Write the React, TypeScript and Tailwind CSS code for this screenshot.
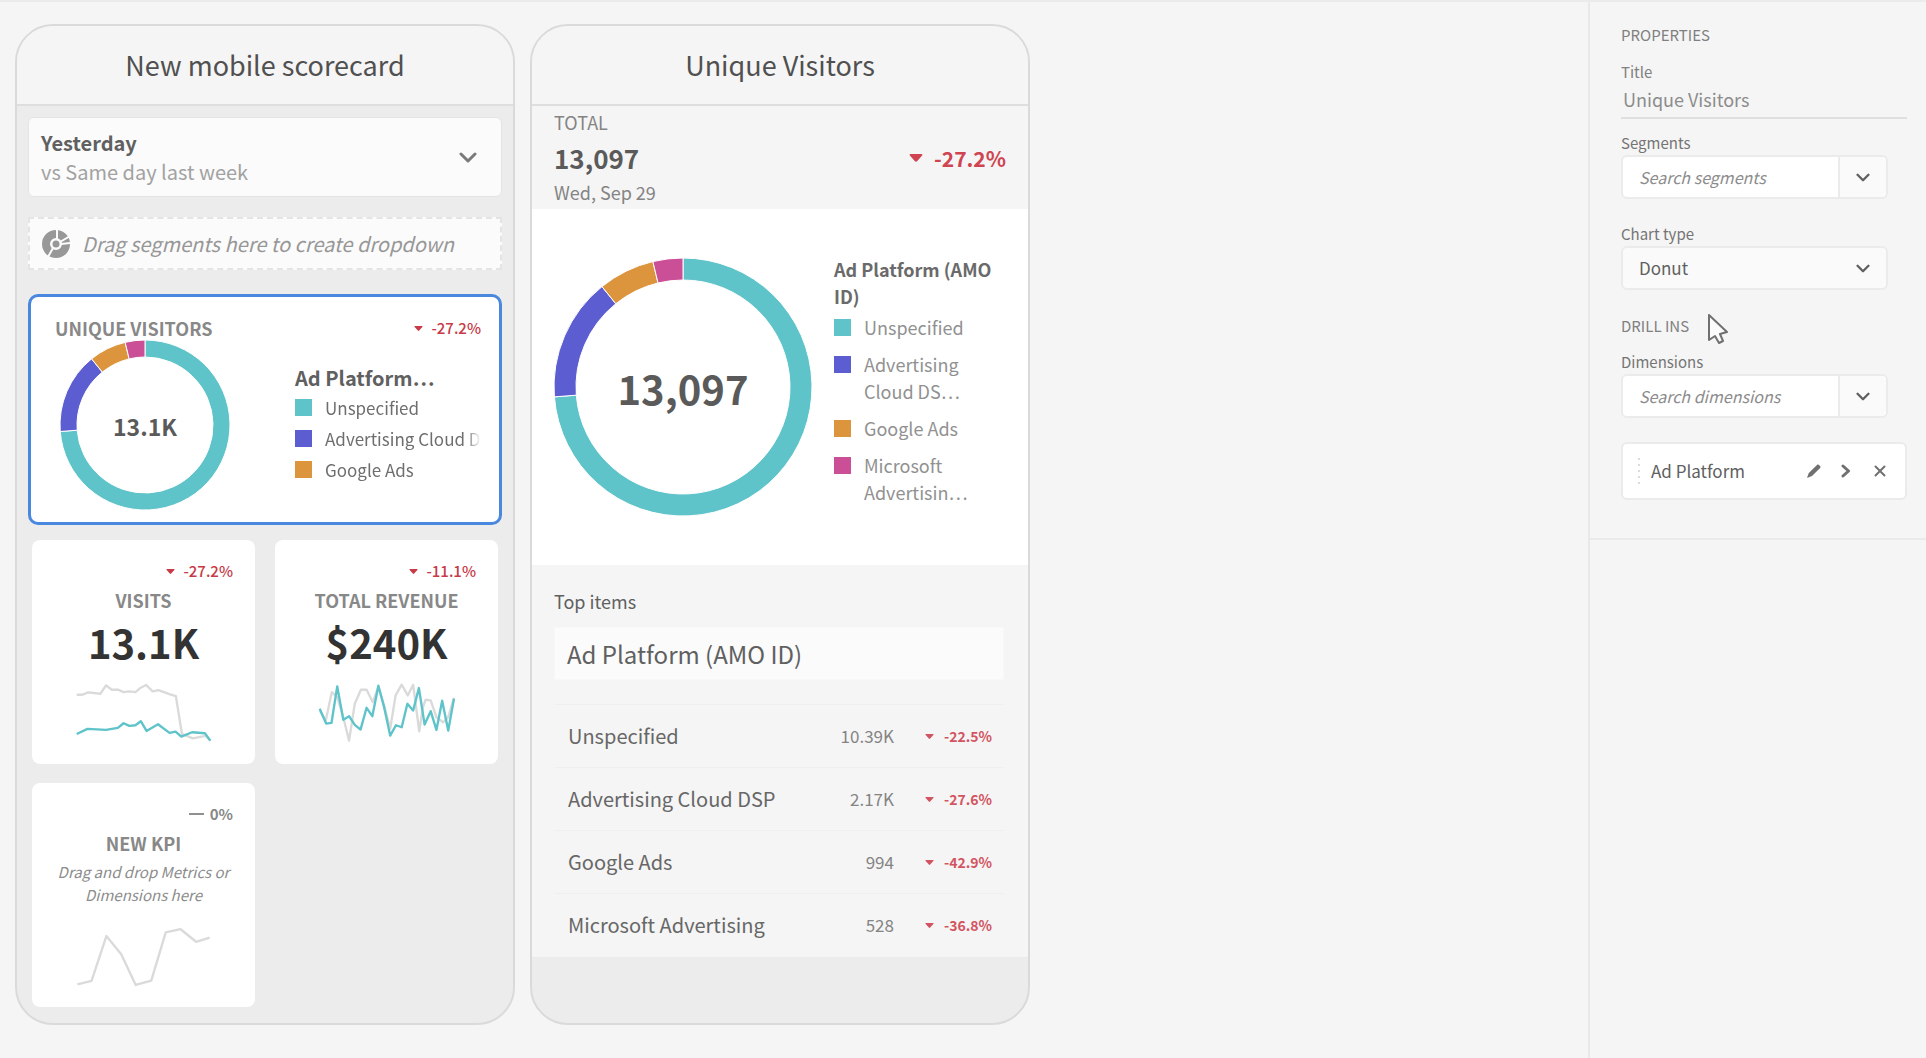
import type { ReactNode } from 'react'

type Slice = { name: string; value: number; color: string; swatch: string }

const slices: Slice[] = [
  { name: 'Unspecified', value: 10390, color: '#5fc3ca', swatch: 'bg-[#5fc3ca]' },
  { name: 'Advertising Cloud DSP', value: 2170, color: '#5c5dd0', swatch: 'bg-[#5c5dd0]' },
  { name: 'Google Ads', value: 994, color: '#dc953c', swatch: 'bg-[#dc953c]' },
  { name: 'Microsoft Advertising', value: 528, color: '#cb4f96', swatch: 'bg-[#cb4f96]' },
]

const topItems = [
  { name: 'Unspecified', value: '10.39K', change: '-22.5%' },
  { name: 'Advertising Cloud DSP', value: '2.17K', change: '-27.6%' },
  { name: 'Google Ads', value: '994', change: '-42.9%' },
  { name: 'Microsoft Advertising', value: '528', change: '-36.8%' },
]

function Donut({ outer, inner, className, label }: { outer: number; inner: number; className: string; label: string }) {
  const total = slices.reduce((sum, s) => sum + s.value, 0)
  const point = (r: number, t: number) =>
    `${(outer + r * Math.sin(t * 2 * Math.PI)).toFixed(2)} ${(outer - r * Math.cos(t * 2 * Math.PI)).toFixed(2)}`
  let start = 0
  return (
    <svg viewBox={`0 0 ${outer * 2} ${outer * 2}`} className={className} role="img" aria-label={label}>
      {slices.map((s) => {
        const from = start
        const to = start + s.value / total
        start = to
        const large = to - from > 0.5 ? 1 : 0
        return (
          <path
            key={s.name}
            fill={s.color}
            stroke="#fff"
            strokeWidth="1"
            d={`M${point(outer, from)} A${outer} ${outer} 0 ${large} 1 ${point(outer, to)} L${point(inner, to)} A${inner} ${inner} 0 ${large} 0 ${point(inner, from)} Z`}
          />
        )
      })}
    </svg>
  )
}

function Chevron({ className }: { className: string }) {
  return (
    <svg viewBox="0 0 18 11" className={className} fill="none" stroke="currentColor" strokeWidth="3" strokeLinecap="round" strokeLinejoin="round" aria-hidden="true">
      <path d="M2 2l7 7 7-7" />
    </svg>
  )
}

function Down({ className }: { className: string }) {
  return (
    <svg viewBox="0 0 10 6" className={className} fill="currentColor" aria-hidden="true">
      <path d="M1 0h8c.8 0 1.100.7.6 1.200L5.800 5.500c-.4.5-1.200.5-1.600 0L.4 1.200C-.1.700.2 0 1 0z" />
    </svg>
  )
}

function Change({ value }: { value: string }) {
  return (
    <span className="flex items-center gap-2 text-[15px] leading-[22px] font-medium text-[#c73a48]">
      <Down className="h-[5px] w-[9px]" />
      {value}
    </span>
  )
}

function Phone({ title, children }: { title: string; children: ReactNode }) {
  return (
    <section className="flex w-[500px] shrink-0 flex-col overflow-hidden rounded-[38px] border-2 border-[#dadada] bg-[#ececec]">
      <h2 className="flex h-20 shrink-0 items-center justify-center border-b-2 border-[#dedede] bg-[#f5f5f5] text-[27px] leading-8 text-[#505050]">
        {title}
      </h2>
      {children}
    </section>
  )
}

function Sparkline({ series }: { series: { points: string; color: string }[] }) {
  return (
    <svg viewBox="0 0 415 185" preserveAspectRatio="none" className="absolute left-1/2 top-[142px] h-[62px] w-[140px] -translate-x-1/2" fill="none" strokeLinejoin="round" aria-hidden="true">
      {series.map((s) => (
        <polyline key={s.points} points={s.points} stroke={s.color} strokeWidth="7" />
      ))}
    </svg>
  )
}

function Tile({ change, title, children }: { change: ReactNode; title: string; children: ReactNode }) {
  return (
    <article className="relative flex h-56 flex-col items-center rounded-lg bg-white pt-5 text-center">
      <div className="self-end pr-[22px]">{change}</div>
      <h3 className="mt-[6px] text-[18px] leading-6 font-bold text-[#888888]">{title}</h3>
      {children}
    </article>
  )
}

function SearchBox({ id, label, placeholder }: { id: string; label: string; placeholder: string }) {
  return (
    <div>
      <label htmlFor={id} className="block text-[15px] leading-6 text-[#747474]">{label}</label>
      <div className="mr-[19px] flex h-11 rounded-md border-2 border-[#ebebeb] bg-white">
        <input id={id} type="text" placeholder={placeholder} className="w-full min-w-0 flex-1 bg-transparent pl-4 text-[16px] text-[#6e6e6e] outline-none placeholder:text-[#8c8c8c] placeholder:italic" />
        <button type="button" aria-label={`Show ${label.toLowerCase()}`} className="flex w-12 items-center justify-center rounded-r-md border-l-2 border-[#ebebeb] bg-[#fafafa] text-[#606060]">
          <Chevron className="h-[9px] w-[14px]" />
        </button>
      </div>
    </div>
  )
}

function SegmentIcon() {
  return (
    <svg viewBox="0 0 28 28" className="h-7 w-7 shrink-0" aria-hidden="true">
      <circle cx="14" cy="14" r="10" fill="none" stroke="#989898" strokeWidth="8" />
      <circle cx="14" cy="14" r="3.500" fill="#989898" />
      <g stroke="#fbfbfb" strokeWidth="2">
        <path d="M15 9V0M18 12l10-6M19 14l9-1M11 18l-5 9" />
      </g>
    </svg>
  )
}

export default function App() {
  return (
    <div className="flex min-h-screen border-t-2 border-[#ebebeb] bg-[#f5f5f5] font-['Noto_Sans_CJK_SC','Open_Sans',sans-serif] text-[#6e6e6e]">
      <main className="flex flex-1 items-start pt-[22px] pr-4 pb-8 pl-[15px]">
        <div className="flex items-stretch gap-[15px]">
          <Phone title="New mobile scorecard">
            <div className="flex flex-col px-[11px] pt-[11px] pb-4">
              <button type="button" className="flex h-20 items-center justify-between rounded-md border border-[#e4e4e4] bg-[#fbfbfb] pr-6 pl-3 text-left">
                <span className="flex flex-col text-[20px] leading-[29px]">
                  <span className="font-bold text-[#606060]">Yesterday</span>
                  <span className="text-[#a2a2a2]">vs Same day last week</span>
                </span>
                <Chevron className="h-[11px] w-[18px] text-[#7a7a7a]" />
              </button>

              <div className="mt-5 flex h-[53px] items-center gap-3 border-2 border-dashed border-[#e4e4e4] bg-[#fbfbfb] pl-3 text-[20px] leading-7 text-[#979797] italic">
                <SegmentIcon />
                Drag segments here to create dropdown
              </div>

              <article className="mt-6 flex h-[231px] flex-col rounded-[10px] border-[3px] border-[#4a88e0] bg-white pt-[19px] pr-[18px] pl-6">
                <div className="flex items-center justify-between">
                  <h3 className="text-[18px] leading-6 font-bold text-[#888888]">UNIQUE VISITORS</h3>
                  <Change value="-27.2%" />
                </div>
                <div className="flex pl-[5px]">
                  <div className="relative h-[170px] w-[170px] shrink-0">
                    <Donut outer={85} inner={68} className="h-full w-full" label="Unique visitors by ad platform" />
                    <span className="absolute inset-0 flex items-center justify-center pt-[2px] text-[23px] leading-8 font-bold text-[#5a5a5a]">13.1K</span>
                  </div>
                  <div className="ml-[65px] min-w-0 flex-1 pt-6">
                    <h4 className="text-[20px] leading-7 font-bold text-[#606060]">Ad Platform…</h4>
                    <ul>
                      {slices.slice(0, 3).map((s) => (
                        <li key={s.name} className="flex h-[31px] items-center gap-[13px]">
                          <span className={`h-[17px] w-[17px] shrink-0 ${s.swatch}`} />
                          <span className="min-w-0 flex-1 overflow-hidden mask-r-from-90% text-[17px] leading-6 whitespace-nowrap">{s.name}</span>
                        </li>
                      ))}
                    </ul>
                  </div>
                </div>
              </article>

              <div className="mt-[15px] grid grid-cols-2 gap-x-5 gap-y-[19px] px-1">
                <Tile title="VISITS" change={<Change value="-27.2%" />}>
                  <p className="text-[40px] leading-[60px] font-bold text-[#333333]">13.1K</p>
                  <Sparkline
                    series={[
                      { color: '#dadada', points: '8,38 25,38 42,31 78,35 95,10 112,23 130,23 147,30 164,28 182,30 198,17 214,9 233,28 250,24 285,37 302,42 320,155 352,168 390,161 405,175' },
                      { color: '#5fc3ca', points: '8,155 40,140 95,143 130,137 147,123 164,131 182,129 198,117 215,146 249,126 283,152 301,148 318,163 350,150 388,153 404,175' },
                    ]}
                  />
                </Tile>
                <Tile title="TOTAL REVENUE" change={<Change value="-11.1%" />}>
                  <p className="text-[40px] leading-[60px] font-bold text-[#333333]">$240K</p>
                  <Sparkline
                    series={[
                      { color: '#dadada', points: '8,85 26,115 44,30 60,45 78,105 95,175 112,65 130,23 147,23 165,60 182,15 200,75 217,140 233,40 251,8 269,40 285,8 303,147 314,75 322,53 337,55 354,105 374,120 389,105 406,47' },
                      { color: '#5fc3ca', points: '8,80 27,124 43,122 60,13 78,113 95,102 112,128 129,142 147,77 164,102 182,11 199,75 217,160 234,129 251,135 268,65 285,85 302,18 319,127 337,87 354,143 371,56 389,145 406,50' },
                    ]}
                  />
                </Tile>
                <Tile
                  title="NEW KPI"
                  change={
                    <span className="flex items-center gap-[6px] text-[15px] leading-[22px] font-bold text-[#888888]">
                      <span className="h-[2px] w-[15px] bg-[#909090]" />
                      0%
                    </span>
                  }
                >
                  <p className="mt-[5px] px-4 text-[15px] leading-[23px] text-[#8c8c8c] italic">Drag and drop Metrics or Dimensions here</p>
                  <Sparkline
                    series={[{ color: '#dadada', points: '10,177 52,167 96,33 140,87 183,179 229,166 272,22 315,12 362,50 402,38' }]}
                  />
                </Tile>
              </div>
            </div>
          </Phone>

          <Phone title="Unique Visitors">
            <div className="flex h-[103px] items-center justify-between bg-[#f5f5f5] px-[22px]">
              <div className="pb-[3px]">
                <p className="text-[18px] leading-[35px] text-[#848484]">TOTAL</p>
                <p className="text-[26px] leading-9 font-bold text-[#5a5a5a]">13,097</p>
                <p className="text-[18px] leading-8 text-[#848484]">Wed, Sep 29</p>
              </div>
              <span className="flex items-center gap-[11px] text-[21px] leading-8 font-bold text-[#cf4450]">
                <Down className="h-2 w-[14px]" />
                -27.2%
              </span>
            </div>

            <div className="flex h-[356px] gap-[22px] bg-white pt-[47px] pl-[22px]">
              <div className="relative mt-[2px] h-[258px] w-[258px] shrink-0">
                <Donut outer={129} inner={107} className="h-full w-full" label="Unique visitors by ad platform" />
                <span className="absolute inset-0 flex items-center justify-center pt-[2px] text-[40px] leading-[56px] font-bold text-[#5a5a5a]">13,097</span>
              </div>
              <div className="w-[170px]">
                <h3 className="text-[18px] leading-[27px] font-bold text-[#6a6a6a]">Ad Platform (AMO ID)</h3>
                <ul className="flex flex-col gap-[10px] pt-1 text-[18px] leading-[27px] text-[#919191]">
                  {['Unspecified', 'Advertising Cloud DS…', 'Google Ads', 'Microsoft Advertisin…'].map((name, i) => (
                    <li key={name} className="flex gap-[13px]">
                      <span className={`mt-[5px] h-[17px] w-[17px] shrink-0 ${slices[i].swatch}`} />
                      <span className="w-[110px]">{name}</span>
                    </li>
                  ))}
                </ul>
              </div>
            </div>

            <div className="bg-[#f5f5f5] pt-[21px] pr-6 pl-[22px]">
              <h3 className="text-[18px] leading-[30px] text-[#606060]">Top items</h3>
              <div className="mt-[11px] flex h-[53px] items-center border border-[#f8f8f8] bg-[#fbfbfb] pl-3 text-[24px] leading-8 text-[#606060]">
                Ad Platform (AMO ID)
              </div>
              <table className="mt-6 w-full">
                <tbody>
                  {topItems.map((item) => (
                    <tr key={item.name} className="h-[63px] border-t border-[#efefef]">
                      <th scope="row" className="pl-[14px] text-left text-[20px] leading-7 font-normal text-[#676767]">{item.name}</th>
                      <td className="text-right text-[17px] leading-6 text-[#848484]">{item.value}</td>
                      <td className="w-[110px] pr-3">
                        <span className="flex items-center justify-end gap-[10px] text-[14px] leading-5 font-bold text-[#d35461]">
                          <Down className="h-[5px] w-[9px]" />
                          {item.change}
                        </span>
                      </td>
                    </tr>
                  ))}
                </tbody>
              </table>
            </div>
          </Phone>
        </div>
      </main>

      <aside className="w-[338px] shrink-0 border-l-2 border-[#e8e8e8]">
        <div className="border-b-2 border-[#eaeaea] pt-[21px] pr-[19px] pb-[38px] pl-[31px]">
          <h2 className="text-[15px] leading-6 text-[#808080]">PROPERTIES</h2>
          <label htmlFor="title" className="mt-[13px] block text-[15px] leading-6 text-[#808080]">Title</label>
          <input id="title" type="text" defaultValue="Unique Visitors" className="h-[35px] w-full border-b-2 border-[#dfdfdf] bg-transparent pb-[3px] pl-[2px] text-[18px] text-[#8c8c8c] outline-none" />

          <div className="mt-3">
            <SearchBox id="segments" label="Segments" placeholder="Search segments" />
          </div>

          <div className="relative mt-[23px] mr-[19px]">
            <label htmlFor="chart-type" className="block text-[15px] leading-6 text-[#747474]">Chart type</label>
            <select id="chart-type" defaultValue="Donut" className="h-11 w-full appearance-none rounded-md border-2 border-[#ebebeb] bg-[#fafafa] pl-4 text-[17px] text-[#606060] outline-none">
              <option>Donut</option>
            </select>
            <Chevron className="pointer-events-none absolute right-[18px] bottom-[17px] h-[9px] w-[14px] text-[#606060]" />
          </div>

          <div className="relative mt-6">
            <h2 className="text-[15px] leading-6 text-[#808080]">DRILL INS</h2>
            <svg viewBox="0 0 20 30" className="absolute top-0 left-[87px] h-[30px] w-5" fill="#fbfbfb" stroke="#707070" strokeWidth="2" strokeLinejoin="round" aria-hidden="true">
              <path d="M1 1v25l6-4 4 7 4-2-3-7 7-2z" />
            </svg>
          </div>

          <div className="mt-3">
            <SearchBox id="dimensions" label="Dimensions" placeholder="Search dimensions" />
          </div>

          <div className="mt-6 flex h-[58px] items-center rounded-md border-2 border-[#ebebeb] bg-white pl-[14px] text-[#606060]">
            <svg viewBox="0 0 4 26" className="h-[26px] w-1" fill="#dcdcdc" aria-hidden="true">
              <path d="M1 0h2v2H1zM1 6h2v2H1zM1 12h2v2H1zM1 18h2v2H1zM1 24h2v2H1z" />
            </svg>
            <span className="ml-[10px] flex-1 text-[17px] leading-6">Ad Platform</span>
            <button type="button" aria-label="Edit" className="flex h-6 w-8 items-center justify-center">
              <svg viewBox="0 0 14 14" className="h-[14px] w-[14px]" fill="#707070" aria-hidden="true">
                <path d="M10 .9c.6-.6 1.300-.6 1.900 0l1.200 1.200c.6.6.6 1.300 0 1.900L5 12.100.6 13.700c-.3.1-.5-.1-.4-.4L1.800 9z" />
              </svg>
            </button>
            <button type="button" aria-label="Open" className="flex h-6 w-8 items-center justify-center">
              <svg viewBox="0 0 10 14" className="h-[14px] w-[10px]" fill="none" stroke="#707070" strokeWidth="3" strokeLinecap="round" strokeLinejoin="round" aria-hidden="true">
                <path d="M2 2l5.500 5L2 12" />
              </svg>
            </button>
            <button type="button" aria-label="Remove" className="mr-[7px] flex h-6 w-9 items-center justify-center">
              <svg viewBox="0 0 12 12" className="h-3 w-3" fill="none" stroke="#707070" strokeWidth="2" strokeLinecap="round" aria-hidden="true">
                <path d="M1.500 1.500l9 9M10.500 1.500l-9 9" />
              </svg>
            </button>
          </div>
        </div>
      </aside>
    </div>
  )
}
